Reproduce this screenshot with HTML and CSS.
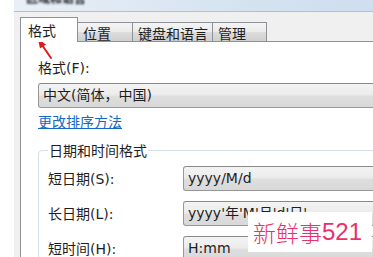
FILE: index.html
```
<!DOCTYPE html>
<html lang="zh-CN">
<head>
<meta charset="utf-8">
<title>区域和语言</title>
<link rel="stylesheet" href="styles.css">
</head>
<body>
<div class="screen">
  <div class="titlebar">
    <span class="app-icon"></span>
    <span class="title">区域和语言</span>
  </div>
  <div class="window">
    <div class="tabs">
      <div class="tab active">格式</div>
      <div class="tab tab-pos">位置</div>
      <div class="tab tab-kbd">键盘和语言</div>
      <div class="tab tab-admin">管理</div>
    </div>
    <div class="panel">
      <div class="field-label">格式(F):</div>
      <div class="combo">中文(简体，中国)</div>
      <a class="link" href="#">更改排序方法</a>
      <fieldset class="group">
        <legend>日期和时间格式</legend>
        <div class="grid">
          <div class="row-label">短日期(S):</div>
          <div class="combo">yyyy/M/d</div>
          <div class="row-label">长日期(L):</div>
          <div class="combo">yyyy'年'M'月'd'日'</div>
          <div class="row-label">短时间(H):</div>
          <div class="combo">H:mm</div>
        </div>
      </fieldset>
    </div>
  </div>
  <svg class="arrow" width="22" height="26" viewBox="0 0 22 26">
    <line x1="8" y1="9" x2="17" y2="22" stroke="#e11b1b" stroke-width="2" stroke-linecap="round"/>
    <polygon points="4,3 12,8.6 6,12.6" fill="#e11b1b"/>
  </svg>
  <div class="watermark"><span class="wm-cjk">新鲜事</span><span class="wm-num">521</span></div>
</div>
</body>
</html>
```
FILE: styles.css
```
html, body {
  margin: 0;
  padding: 0;
  background: #ffffff;
}
.screen {
  position: relative;
  width: 373px;
  height: 257px;
  overflow: hidden;
  font-family: "DejaVu Sans", "Noto Sans CJK SC", sans-serif;
  color: #1e1e1e;
}
.titlebar {
  height: 11px;
  margin-left: 14px;
  border-bottom: 1px solid #b4bfca;
  background: linear-gradient(to right, #e9eff6 0%, #d4e2f0 40%, #c3d7eb 100%);
  display: flex;
  align-items: flex-start;
  overflow: hidden;
  width: 600px;
}
.app-icon {
  width: 10px;
  height: 5px;
  margin-left: -10px;
  border-radius: 0 0 5px 5px;
  background: #9eb2c6;
  flex: none;
}
.title {
  margin-left: 12px;
  margin-top: -9px;
  font-family: "Noto Sans CJK SC", sans-serif;
  font-weight: 700;
  font-size: 12px;
  line-height: 14px;
  color: #1f242b;
  filter: blur(0.8px);
}
.window {
  margin-left: 14px;
  width: 600px;
  height: 260px;
  background: #f0f0f0;
  padding: 5px 0 0 6px;
  box-sizing: border-box;
  display: flex;
  flex-direction: column;
}
.tabs {
  display: flex;
  align-items: flex-end;
  height: 24px;
  position: relative;
  z-index: 2;
}
.tab {
  box-sizing: border-box;
  height: 19px;
  border: 1px solid #8e9198;
  border-bottom: none;
  background: linear-gradient(#f4f4f4 0%, #ebebeb 50%, #dddddd 51%, #cfcfcf 100%);
  font-family: "Noto Sans CJK SC", sans-serif;
  font-size: 14px;
  line-height: 16px;
  padding: 2px 0 0 5px;
  margin-left: -1px;
  color: #1e1e1e;
}
.tab.active {
  height: 25px;
  width: 58px;
  margin-left: 0;
  margin-bottom: -1px;
  background: #ffffff;
  padding: 4px 0 0 7px;
}
.tab-pos { width: 56px; }
.tab-kbd { width: 81px; }
.tab-admin { width: 55px; }
.panel {
  flex: 1;
  background: #ffffff;
  border-top: 1px solid #8e9198;
  border-left: 1px solid #8e9198;
  padding: 17px 0 0 17px;
  display: flex;
  flex-direction: column;
  align-items: flex-start;
}
.field-label {
  font-size: 14px;
  line-height: 18px;
  height: 18px;
}
.combo {
  box-sizing: border-box;
  height: 25px;
  width: 420px;
  border: 1px solid #979797;
  border-top-color: #8a8a8a;
  border-radius: 3px;
  background: linear-gradient(#f3f3f3 0%, #ececec 45%, #dedede 55%, #d8d8d8 100%);
  font-size: 14px;
  line-height: 23px;
  padding-left: 4px;
  white-space: nowrap;
}
.panel > .combo {
  margin-top: 6px;
}
.link {
  margin-top: 4px;
  font-size: 14px;
  line-height: 18px;
  color: #1469c4;
  text-decoration: underline;
  font-family: "Noto Sans CJK SC", sans-serif;
}
.group {
  margin: 11px 0 0 0;
  border: 1px solid #d5dfe5;
  border-radius: 4px;
  padding: 7px 0 20px 9px;
  width: 420px;
  box-sizing: border-box;
}
.group legend {
  font-family: "Noto Sans CJK SC", sans-serif;
  font-size: 14px;
  line-height: 18px;
  padding: 0 1px;
  color: #1e1e1e;
}
.grid {
  display: grid;
  grid-template-columns: 135px 1fr;
  grid-auto-rows: 25px;
  row-gap: 10px;
  align-items: center;
}
.row-label {
  font-size: 14px;
  line-height: 18px;
}
.grid .combo {
  width: 260px;
}
.arrow {
  position: absolute;
  left: 34px;
  top: 36px;
}
.watermark {
  position: absolute;
  left: 248px;
  top: 212px;
  width: 124px;
  height: 40px;
  background: #ffffff;
  color: #e9306a;
  display: flex;
  align-items: center;
  padding-left: 5px;
  box-sizing: border-box;
}
.wm-cjk {
  font-family: "Noto Sans CJK SC", sans-serif;
  font-weight: 300;
  font-size: 23px;
  line-height: 26px;
}
.wm-num {
  font-family: "Liberation Sans", sans-serif;
  font-size: 24px;
  line-height: 26px;
}
```
